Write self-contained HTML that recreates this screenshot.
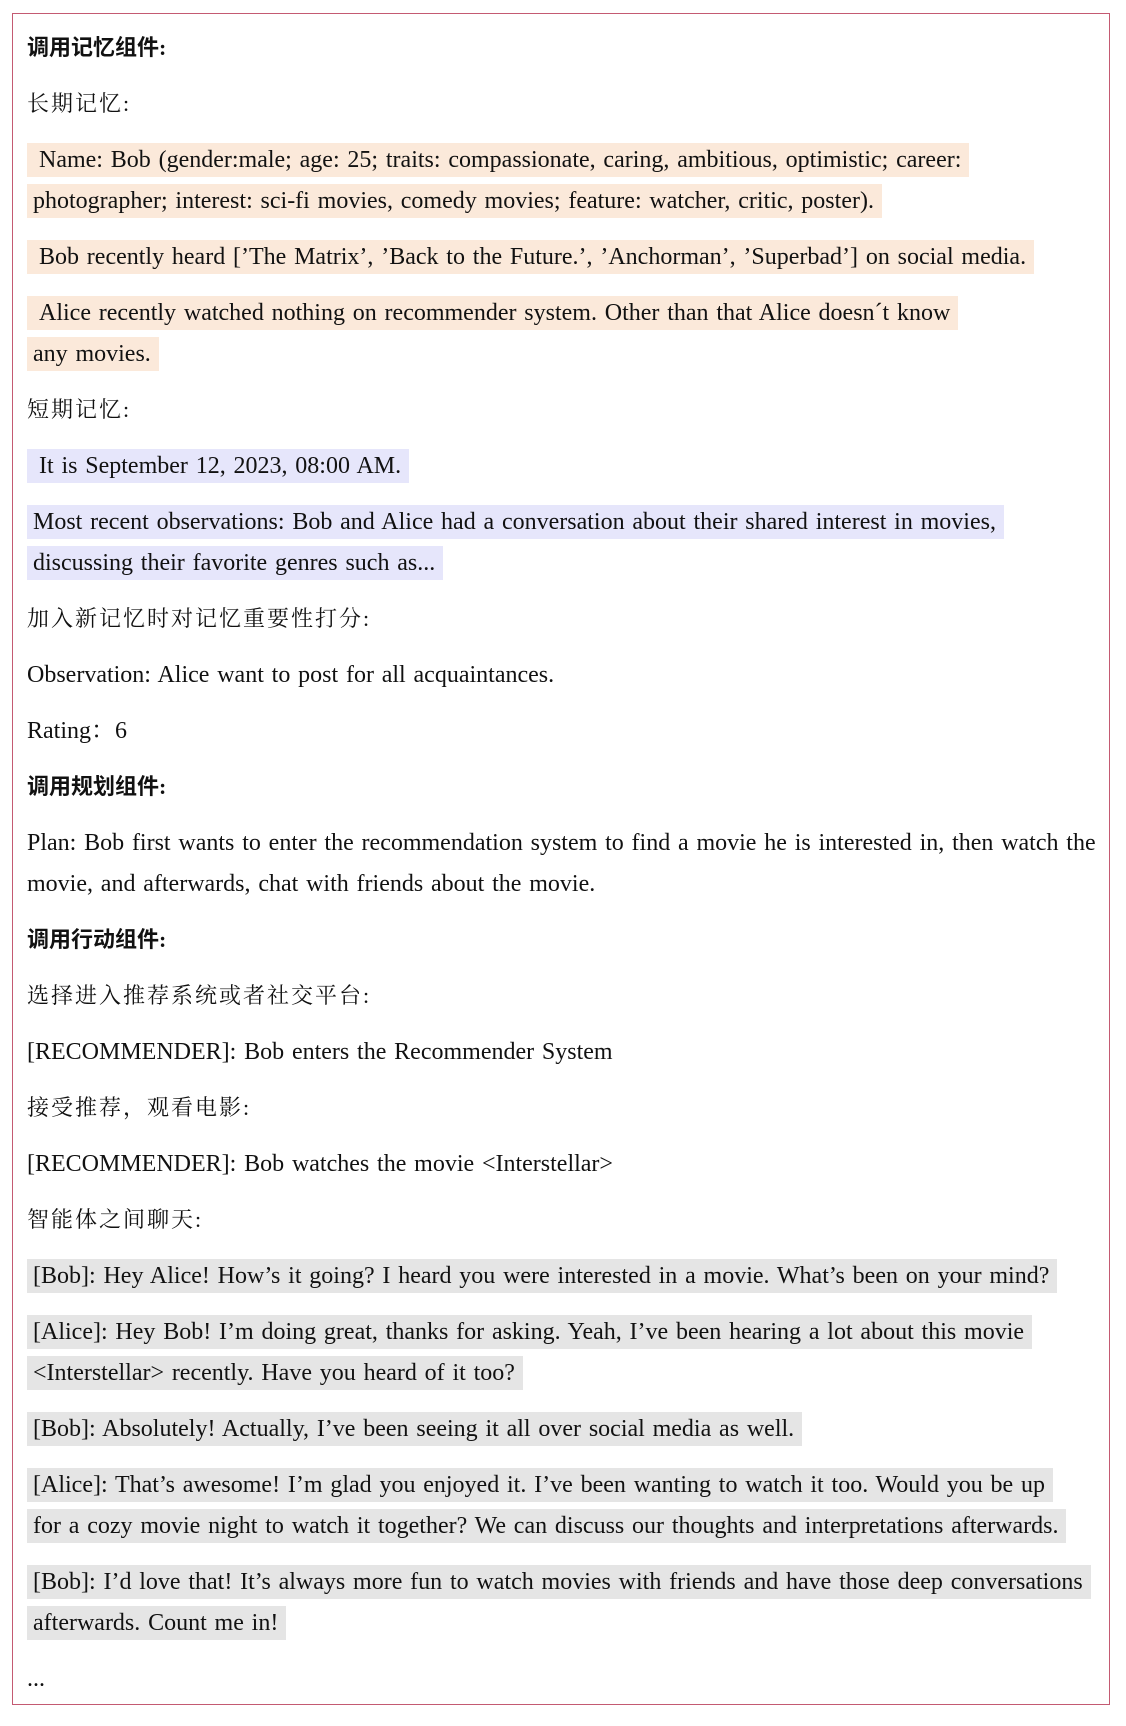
<!DOCTYPE html>
<html><head><meta charset="utf-8"><style>
body{margin:0;width:1126px;height:1726px;background:#fff;position:relative;font-family:"Liberation Serif","Noto Serif CJK SC",serif;font-size:24px;word-spacing:1.8px;color:#111}
.frame{position:absolute;left:12px;top:13px;width:1098px;height:1692px;border:1.5px solid #c45a72;box-sizing:border-box}
.w{position:absolute;left:0;top:2px;width:1126px}
.l{position:absolute;left:27px;height:34px;line-height:34px;white-space:nowrap}
.l span{display:inline-block;height:34px;padding:0 8px 0 6px}
.p span{background:#fbe9da}.v span{background:#e6e6fb}.g span{background:#e5e5e5}
.pl span{padding-left:12px}
.b{font-weight:bold;font-family:"Liberation Serif","Noto Sans CJK SC",serif;font-size:22px}
.c{letter-spacing:2px;font-size:22px}
</style></head><body>
<div class="frame"></div>
<div class="w">
<div class="l b" style="top:29px">调用记忆组件:</div>
<div class="l c" style="top:85px">长期记忆:</div>
<div class="l p pl" style="top:141px"><span>Name: Bob (gender:male; age: 25; traits: compassionate, caring, ambitious, optimistic; career:</span></div>
<div class="l p" style="top:182px"><span>photographer; interest: sci-fi movies, comedy movies; feature: watcher, critic, poster).</span></div>
<div class="l p pl" style="top:238px"><span>Bob recently heard [’The Matrix’, ’Back to the Future.’, ’Anchorman’, ’Superbad’] on social media.</span></div>
<div class="l p pl" style="top:294px"><span>Alice recently watched nothing on recommender system. Other than that Alice doesn´t know</span></div>
<div class="l p" style="top:335px"><span>any movies.</span></div>
<div class="l c" style="top:391px">短期记忆:</div>
<div class="l v pl" style="top:447px"><span>It is September 12, 2023, 08:00 AM.</span></div>
<div class="l v" style="top:503px"><span>Most recent observations: Bob and Alice had a conversation about their shared interest in movies,</span></div>
<div class="l v" style="top:544px"><span>discussing their favorite genres such as...</span></div>
<div class="l c" style="top:600px">加入新记忆时对记忆重要性打分:</div>
<div class="l" style="top:656px">Observation: Alice want to post for all acquaintances.</div>
<div class="l" style="top:712px">Rating：6</div>
<div class="l b" style="top:768px">调用规划组件:</div>
<div class="l" style="top:824px">Plan: Bob first wants to enter the recommendation system to find a movie he is interested in, then watch the</div>
<div class="l" style="top:865px">movie, and afterwards, chat with friends about the movie.</div>
<div class="l b" style="top:921px">调用行动组件:</div>
<div class="l c" style="top:977px">选择进入推荐系统或者社交平台:</div>
<div class="l" style="top:1033px">[RECOMMENDER]: Bob enters the Recommender System</div>
<div class="l c" style="top:1089px">接受推荐，观看电影:</div>
<div class="l" style="top:1145px">[RECOMMENDER]: Bob watches the movie &lt;Interstellar&gt;</div>
<div class="l c" style="top:1201px">智能体之间聊天:</div>
<div class="l g" style="top:1257px"><span>[Bob]: Hey Alice! How’s it going? I heard you were interested in a movie. What’s been on your mind?</span></div>
<div class="l g" style="top:1313px"><span>[Alice]: Hey Bob! I’m doing great, thanks for asking. Yeah, I’ve been hearing a lot about this movie</span></div>
<div class="l g" style="top:1354px"><span>&lt;Interstellar&gt; recently. Have you heard of it too?</span></div>
<div class="l g" style="top:1410px"><span>[Bob]: Absolutely! Actually, I’ve been seeing it all over social media as well.</span></div>
<div class="l g" style="top:1466px"><span>[Alice]: That’s awesome! I’m glad you enjoyed it. I’ve been wanting to watch it too. Would you be up</span></div>
<div class="l g" style="top:1507px"><span>for a cozy movie night to watch it together? We can discuss our thoughts and interpretations afterwards.</span></div>
<div class="l g" style="top:1563px"><span>[Bob]: I’d love that! It’s always more fun to watch movies with friends and have those deep conversations</span></div>
<div class="l g" style="top:1604px"><span>afterwards. Count me in!</span></div>
<div class="l" style="top:1660px">...</div>
</div>
</body></html>
